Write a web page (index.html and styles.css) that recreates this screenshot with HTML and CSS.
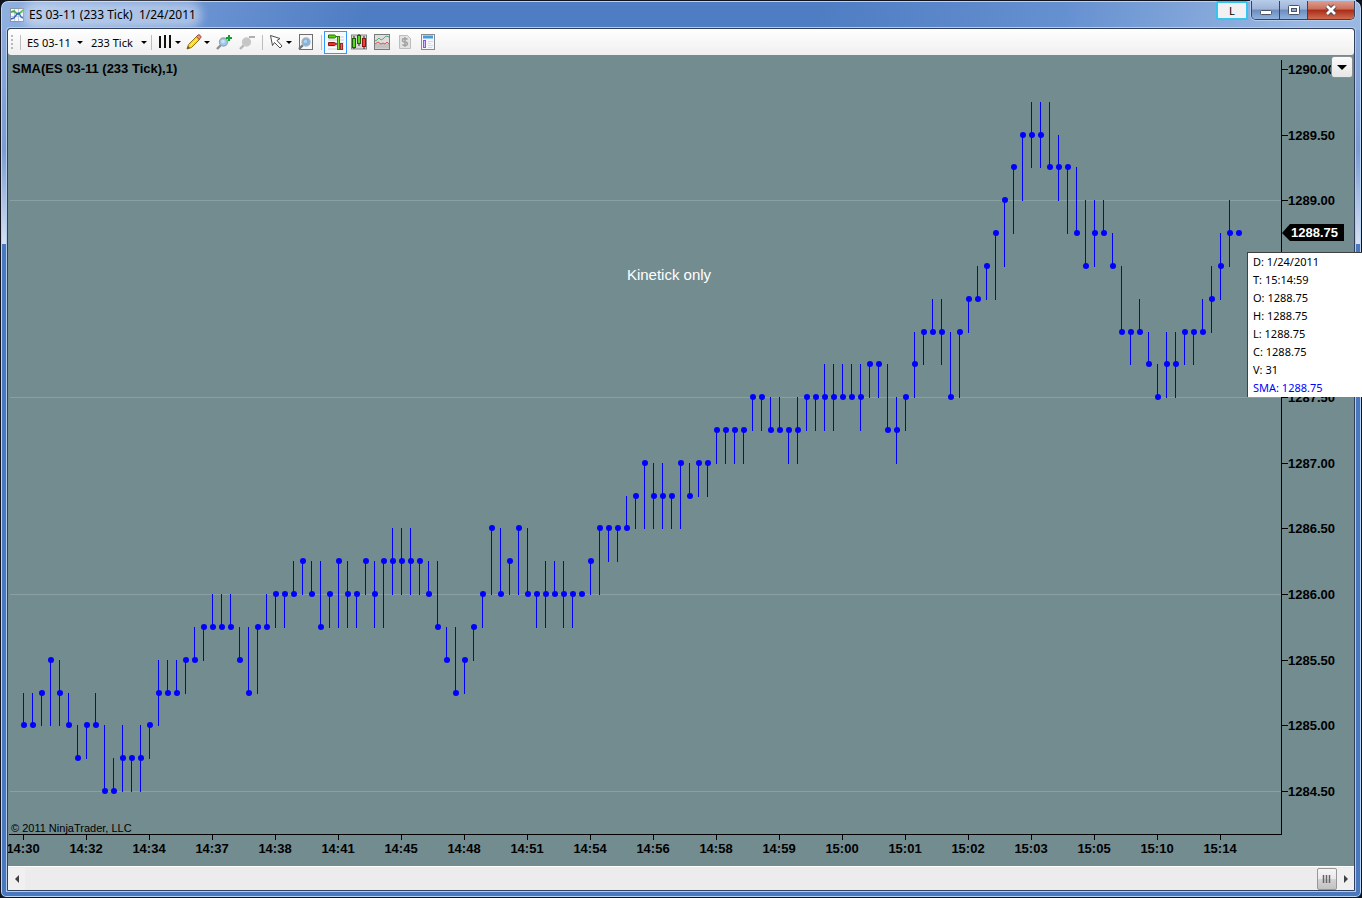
FILE: index.html
```
<!DOCTYPE html>
<html lang="en">
<head>
  <meta charset="UTF-8">
  <meta name="viewport" content="width=device-width, initial-scale=1.0">
  <title>ES 03-11 (233 Tick) 1/24/2011</title>
  <link rel="stylesheet" href="styles.css">
</head>
<body>
  <div class="window">
    <header class="title-bar">
      <svg class="app-icon" width="14" height="14" viewBox="0 0 14 14">
        <rect x="0.5" y="0.5" width="13" height="13" fill="#f6f7fb" stroke="#8b93a8"/>
        <path d="M4.5 1v12M8.5 1v12M1 4.5h12M1 8.5h12" stroke="#c0c6dc"/>
        <path d="M1 4l3-1 3 3 2 0 4-4" fill="none" stroke="#35b535" stroke-width="1.6"/>
        <path d="M1 11l3-1 3-4 2-1 2 4 2 1" fill="none" stroke="#2f5fc4" stroke-width="1.4"/>
      </svg>
      <h1 class="title">ES 03-11 (233 Tick)&nbsp; 1/24/2011</h1>
      <div class="window-buttons">
        <button class="link-btn">L</button>
        <div class="caption-group">
          <button class="caption-btn" title="Minimize">
            <svg width="14" height="12" viewBox="0 0 14 12"><rect x="1.500" y="6.500" width="11" height="4" rx="1" fill="#fff" stroke="#4a5268"/></svg>
          </button>
          <button class="caption-btn" title="Maximize">
            <svg width="14" height="12" viewBox="0 0 14 12"><rect x="1.500" y="1.500" width="11" height="9" rx="1" fill="#fff" stroke="#4a5268"/><rect x="4.500" y="4.500" width="5" height="3" fill="#8eabd6" stroke="#4a5268"/></svg>
          </button>
          <button class="caption-btn close" title="Close">
            <svg width="14" height="12" viewBox="0 0 14 12"><path d="M3 2l8 8M11 2l-8 8" stroke="#59474f" stroke-width="4.600"/><path d="M3 2l8 8M11 2l-8 8" stroke="#fff" stroke-width="2.600"/></svg>
          </button>
        </div>
      </div>
    </header>

    <main class="client">
      <div class="toolbar">
        <span class="grip"></span>
        <span class="sep"></span>
        <label class="picker">
          <select aria-label="Instrument"><option>ES 03-11</option></select>
          <i class="caret"></i>
        </label>
        <label class="picker interval">
          <select aria-label="Interval"><option>233 Tick</option></select>
          <i class="caret"></i>
        </label>
        <span class="sep"></span>
        <button class="tool split" title="Chart style">
          <svg width="16" height="16" viewBox="0 0 16 16"><path d="M3 2v12M8 1v13" stroke="#111" stroke-width="2"/><path d="M13 1v13" stroke="#111" stroke-width="2"/></svg>
          <i class="caret"></i>
        </button>
        <button class="tool split" title="Drawing tools">
          <svg width="16" height="16" viewBox="0 0 16 16">
            <path d="M1 15l1.500-4.500L11 2l3 3-8.500 8.500z" fill="#f8d62e" stroke="#8f7419"/>
            <path d="M4.500 11.500L12 4" stroke="#fff19b"/>
            <path d="M10.500 2.500l1.500-1.500q1-.8 2 .3l.7.7q.8 1-.2 2L13 5.500z" fill="#e9938a" stroke="#a04a43"/>
            <path d="M1 15l1-3 2 2z" fill="#6b5530"/>
          </svg>
          <i class="caret"></i>
        </button>
        <button class="tool" title="Zoom in">
          <svg width="16" height="16" viewBox="0 0 16 16">
            <path d="M1 15l4-4" stroke="#8b8f96" stroke-width="2.400"/>
            <circle cx="7.500" cy="8" r="4" fill="#9ccbee" stroke="#9aa7b5" stroke-width="1.400"/>
            <circle cx="7" cy="7.500" r="1.800" fill="#c6e4f8"/>
            <path d="M13 1v6M10 4h6" stroke="#0aa52c" stroke-width="2"/>
          </svg>
        </button>
        <button class="tool" title="Zoom out" disabled>
          <svg width="16" height="16" viewBox="0 0 16 16">
            <path d="M1 15l4-4" stroke="#b5b5b5" stroke-width="2.400"/>
            <circle cx="7.500" cy="8" r="4" fill="#c6c6c6" stroke="#c9c9c9" stroke-width="1.400"/>
            <path d="M10 3h6" stroke="#b0b0b0" stroke-width="2"/>
          </svg>
        </button>
        <span class="sep"></span>
        <button class="tool split" title="Cursor">
          <svg width="16" height="16" viewBox="0 0 16 16"><path d="M2.500 1.500l9.500 3-3 2 5 5.500-2 2-5.500-5.500-2 3z" fill="#fff" stroke="#4c4c4c"/></svg>
          <i class="caret"></i>
        </button>
        <button class="tool" title="Zoom frame">
          <svg width="16" height="16" viewBox="0 0 16 16">
            <rect x="1.500" y="0.500" width="13" height="15" fill="#f7f7f7" stroke="#6f6f6f"/>
            <path d="M1 15l4-4" stroke="#777" stroke-width="2.400"/>
            <circle cx="8" cy="8" r="4" fill="#7fb4e2" stroke="#a8b4c0" stroke-width="1.400"/>
            <circle cx="7.500" cy="7.500" r="1.800" fill="#a9d2f2"/>
          </svg>
        </button>
        <span class="sep"></span>
        <button class="tool active" title="Chart trader">
          <svg width="16" height="16" viewBox="0 0 16 16">
            <path d="M0 3h16M0 6h16M0 9h16M0 12h16M0 15h16" stroke="#d0d0d0"/>
            <path d="M8 2.500h3M8 10h3" stroke="#333"/>
            <path d="M.5 1h6l2 1.500-2 1.500h-6z" fill="#58d400" stroke="#2c6f00"/>
            <path d="M.5 8.500h6l2 1.500-2 1.500h-6z" fill="#f03028" stroke="#8c1410"/>
            <rect x="9.500" y="2.500" width="2" height="13" fill="#7ade30" stroke="#3b7c18"/>
            <rect x="12.500" y="9.500" width="2" height="6" fill="#f06060" stroke="#a02828"/>
          </svg>
        </button>
        <button class="tool" title="Data box">
          <svg width="16" height="16" viewBox="0 0 16 16">
            <rect x="0.500" y="1" width="15" height="14" fill="#d8d8d8" stroke="#858585"/>
            <path d="M3 2v13M8 0v12M13 2v13" stroke="#222"/>
            <rect x="1.500" y="4.500" width="3" height="9" fill="#58d820" stroke="#235c08"/>
            <rect x="6.500" y="1.500" width="3" height="8" fill="#58d820" stroke="#235c08"/>
            <rect x="11.500" y="4.500" width="3" height="8" fill="#f04038" stroke="#8c1410"/>
          </svg>
        </button>
        <button class="tool" title="Indicators">
          <svg width="16" height="16" viewBox="0 0 16 16">
            <rect x="0.500" y="0.500" width="15" height="15" fill="#dedede" stroke="#7b7b7b"/>
            <path d="M1 9.500h14v5H1z" fill="#c2c2c2"/>
            <path d="M1 7l2-1 2-2 2 2 2-1 3-3 3 1" fill="none" stroke="#4fae78"/>
            <path d="M1 10l3-2 3 2 2-1 2 1 2-2 2 2" fill="none" stroke="#e85050"/>
          </svg>
        </button>
        <button class="tool" title="Strategies" disabled>
          <svg width="16" height="16" viewBox="0 0 16 16">
            <path d="M2.500 1.500h8l3 3v10h-11z" fill="#e2e2e2" stroke="#bdbdbd"/>
            <path d="M10.500 5.500q-1-1-2.500-1-2.500 0-2.500 1.700 0 1.500 2.500 1.800 2.500.3 2.500 1.800Q10.500 11.500 8 11.500q-1.500 0-2.500-1M8 3v10" fill="none" stroke="#a2a2a2" stroke-width="1.400"/>
          </svg>
        </button>
        <button class="tool" title="Properties">
          <svg width="16" height="16" viewBox="0 0 16 16">
            <rect x="1.500" y="0.500" width="13" height="15" fill="#f4f6fb" stroke="#8a8a92"/>
            <path d="M3 3h10" stroke="#459ddb" stroke-width="3"/>
            <rect x="3.500" y="6.500" width="2" height="7" fill="#d7bdff" stroke="#9250e8"/>
            <path d="M8 7.500h5M8 9.500h3M8 11.500h5M8 13.500h4" stroke="#d5d9e8"/>
          </svg>
        </button>
      </div>

      <div class="chart">
        <svg class="plot" id="plot"></svg>
        <button class="chart-menu" title="Chart menu"><i class="caret large"></i></button>
      </div>

      <div class="scroll-bar">
        <button class="scroll-arrow" title="Scroll left">
          <svg width="4" height="8" viewBox="0 0 4 8"><path d="M4 0v8L0 4z" fill="#404040"/></svg>
        </button>
        <button class="scroll-thumb" title="Scroll">
          <svg width="10" height="8" viewBox="0 0 10 8"><path d="M1.500 0v8M4.500 0v8M7.500 0v8" stroke="#666" stroke-width="1.500"/></svg>
        </button>
        <button class="scroll-arrow" title="Scroll right">
          <svg width="4" height="8" viewBox="0 0 4 8"><path d="M0 0v8l4-4z" fill="#404040"/></svg>
        </button>
      </div>
    </main>

    <ul class="data-box" id="dataBox">
      <li>D: 1/24/2011</li>
      <li>T: 15:14:59</li>
      <li>O: 1288.75</li>
      <li>H: 1288.75</li>
      <li>L: 1288.75</li>
      <li>C: 1288.75</li>
      <li>V: 31</li>
      <li class="sma">SMA: 1288.75</li>
    </ul>
  </div>

  <script src="chart.js"></script>
</body>
</html>
```

FILE: styles.css
```
* {
  margin: 0;
  padding: 0;
  box-sizing: border-box;
}

body {
  font-family: 'Noto Sans', 'Open Sans', sans-serif;
  font-size: 11px;
  color: #000;
  background: #10131c;
}

button {
  border: none;
  background: none;
  font: inherit;
  color: inherit;
  display: flex;
  align-items: center;
  justify-content: center;
}

svg {
  display: block;
  flex-shrink: 0;
}

.window {
  position: relative;
  height: 100vh;
  min-height: 400px;
  display: flex;
  flex-direction: column;
  padding: 0 6px 6px;
  border: 1px solid #10131c;
  border-radius: 8px 8px 6px 6px;
  box-shadow: inset 0 0 0 1px #b9d5f3;
  background:
    linear-gradient(100deg, #8fb0df 0, #6d95d3 180px, #4f7dc3 360px, #4f7dc3 60%, #6590d0 78%, #9ab8e2 96%) top / 100% 29px no-repeat,
    linear-gradient(#8cabdc 0, #7b9bd2 120px, #d3dff2 212px, #d3dff2 214px, #4a78bf 214px) 0 29px no-repeat;
}

/* title bar */
.title-bar {
  height: 27px;
  flex-shrink: 0;
  display: flex;
  align-items: center;
  padding-left: 3px;
}

.title {
  margin-left: 5px;
  font-size: 12px;
  font-weight: normal;
  line-height: 16px;
  border-radius: 8px;
  background: rgba(255,255,255,0.4);
  box-shadow: 0 0 8px 6px rgba(255,255,255,0.4);
}

.window-buttons {
  margin-left: auto;
  align-self: flex-start;
  display: flex;
  align-items: flex-start;
  gap: 3px;
}

.link-btn {
  width: 32px;
  height: 19px;
  border: 2px solid #35c3ef;
  border-radius: 2px;
  background: #f1f1f3;
}

.caption-group {
  display: flex;
  height: 19px;
  border: 1px solid #39425c;
  border-top: none;
  border-radius: 0 0 5px 5px;
  overflow: hidden;
  box-shadow: 0 0 0 1px #b4cbea;
}

.caption-btn {
  width: 28px;
  border-right: 1px solid #39425c;
  background: linear-gradient(#b6c9e6 0, #9db4d8 45%, #6c8cbd 50%, #91b1de 100%);
}

.caption-btn.close {
  width: 46px;
  border-right: none;
  background: linear-gradient(#e09d8e 0, #ca6f5c 45%, #aa2b16 50%, #cf6c50 100%);
}

/* client area */
.client {
  flex: 1;
  min-height: 0;
  display: flex;
  flex-direction: column;
  border: 1px solid #303f5c;
  border-radius: 3px 3px 0 0;
  box-shadow: 0 0 0 1px #b4cbea;
  background: #728c90;
  overflow: hidden;
}

.toolbar {
  height: 26px;
  flex-shrink: 0;
  display: flex;
  align-items: center;
  padding-left: 3px;
  border-radius: 3px;
  background: linear-gradient(#fff, #efefef);
}

.grip {
  width: 2px;
  height: 14px;
  margin-right: 3px;
  background: repeating-linear-gradient(#b8b8b8 0, #b8b8b8 2px, transparent 2px, transparent 4px);
}

.sep {
  width: 1px;
  height: 15px;
  margin: 0 2px 0 4px;
  background: #bdbdbd;
}

.picker {
  width: 64px;
  display: flex;
  align-items: center;
  padding-left: 4px;
}

.picker.interval {
  width: 60px;
}

.picker select {
  width: 50px;
  border: none;
  appearance: none;
  background: none;
  font: inherit;
}

.caret {
  flex-shrink: 0;
  border: 3px solid transparent;
  border-top-color: #000;
  border-bottom: none;
}

.caret.large {
  border-width: 5px;
  border-bottom: none;
}

.tool {
  width: 23px;
  height: 23px;
  flex-shrink: 0;
}

.tool.split {
  width: 29px;
  gap: 2px;
}

.tool.active {
  border: 1px solid #3399ff;
  background: #f5faff;
}

/* chart */
.chart {
  position: relative;
  flex: 1;
  min-height: 0;
}

.plot {
  width: 100%;
  height: 100%;
  font-family: 'Liberation Sans', Arial, sans-serif;
}

.plot .grid {
  fill: #8aa0a4;
}

.plot .axis {
  fill: #000;
}

.plot .bar,
.plot .dot {
  fill: #0000ff;
}

.plot .label {
  font-size: 13px;
  font-weight: bold;
}

.plot .time {
  text-anchor: middle;
}

.plot .last-price {
  fill: #fff;
}

.plot .copyright {
  font-size: 11px;
}

.plot .note {
  font-size: 15px;
  fill: #fff;
  text-anchor: middle;
}

.chart-menu {
  position: absolute;
  top: 1px;
  right: 1px;
  width: 22px;
  height: 22px;
  border: 1px solid #8a8f94;
  border-radius: 3px;
  background: linear-gradient(#fafafa, #e6e6e6);
}

/* scroll bar */
.scroll-bar {
  height: 24px;
  flex-shrink: 0;
  display: flex;
  padding-top: 1px;
  border-top: 1px solid #fff;
  background: #ececec;
}

.scroll-arrow {
  width: 17px;
  background: #f0f0f0;
}

.scroll-thumb {
  width: 20px;
  margin-left: auto;
  border: 1px solid #979797;
  border-radius: 2px;
  background: linear-gradient(#f5f5f5 0, #e9e9e9 48%, #d2d2d2 52%, #c2c2c2 100%);
}

/* data box floats over the price axis */
.data-box {
  position: absolute;
  top: 251px;
  right: -1px;
  width: 115px;
  padding-left: 5px;
  border: 1px solid #404040;
  border-right: none;
  border-bottom: none;
  background: #fff;
  list-style: none;
  line-height: 18px;
}

.data-box .sma {
  color: #0000ff;
}
```

FILE: chart.js
```
// [high, low, close] of each bar, in ticks of 0.25 above BASE
const BASE = 1284.5;
const TICK = 0.25;
const TOP_LEVEL = 22;
const BAR_WIDTH = 9;

const bars = [
  [3,2,2], [3,2,2], [3,2,3], [4,2,4], [4,2,3], [3,2,2], [2,1,1], [2,1,2], [3,2,2], [2,0,0],
  [1,0,0], [2,0,1], [1,0,1], [2,0,1], [2,1,2], [4,2,3], [4,3,3], [4,3,3], [4,3,4], [5,4,4],
  [5,4,5], [6,5,5], [6,5,5], [6,5,5], [5,4,4], [5,3,3], [5,3,5], [6,5,5], [6,5,6], [6,5,6],
  [7,6,6], [7,6,7], [7,6,6], [7,5,5], [6,5,6], [7,5,7], [7,5,6], [6,5,6], [7,6,7], [7,5,6],
  [7,5,7], [8,6,7], [8,6,7], [8,6,7], [7,6,7], [7,6,6], [7,5,5], [5,4,4], [5,3,3], [4,3,4],
  [5,4,5], [6,5,6], [8,6,8], [8,6,6], [7,6,7], [8,6,8], [8,6,6], [6,5,6], [7,5,6], [7,6,6],
  [7,5,6], [6,5,6], [6,6,6], [7,6,7], [8,6,8], [8,7,8], [8,7,8], [9,8,8], [9,8,9], [10,8,10],
  [10,8,9], [10,8,9], [9,8,9], [10,8,10], [10,9,9], [10,9,10], [10,9,10], [11,10,11], [11,10,11], [11,10,11],
  [11,10,11], [12,11,12], [12,11,12], [12,11,11], [12,11,11], [11,10,11], [12,10,11], [12,11,12], [12,11,12], [13,11,12],
  [13,11,12], [13,12,12], [13,12,12], [13,11,12], [13,12,13], [13,12,13], [13,11,11], [12,10,11], [12,11,12], [14,12,13],
  [14,13,14], [15,14,14], [15,13,14], [14,12,12], [14,12,14], [15,14,15], [16,15,15], [16,15,16], [17,15,17], [18,16,18],
  [19,17,19], [20,18,20], [21,19,20], [21,19,20], [21,19,19], [20,18,19], [19,17,19], [19,17,17], [18,16,16], [18,16,17],
  [18,17,17], [17,16,16], [16,14,14], [14,13,14], [15,14,14], [14,13,13], [13,12,12], [14,12,13], [14,12,13], [14,13,14],
  [14,13,14], [15,14,14], [16,14,15], [17,15,16], [18,16,17], [17,17,17]
];

// one label every 7 bars
const times = ['14:30', '14:32', '14:34', '14:37', '14:38', '14:41', '14:45', '14:48', '14:51', '14:54',
  '14:56', '14:58', '14:59', '15:00', '15:01', '15:02', '15:03', '15:05', '15:10', '15:14'];

const plot = document.getElementById('plot');
const dataBox = document.getElementById('dataBox');

function rect(cls, x, y, w, h) {
  return `<rect class="${cls}" x="${x}" y="${y}" width="${w}" height="${h}"/>`;
}

function text(cls, x, y, value) {
  return `<text class="${cls}" x="${x}" y="${y}">${value}</text>`;
}

function draw() {
  const width = plot.clientWidth;
  const height = plot.clientHeight;
  const axisX = width - 73;
  const axisY = height - 32;
  const levelY = level => Math.round(height - 75 - level * (height - 89) / TOP_LEVEL);
  const barX = i => axisX - 42 - (bars.length - 1 - i) * BAR_WIDTH;
  const plotTop = plot.getBoundingClientRect().top;
  const box = dataBox.getBoundingClientRect();
  let out = '';

  for (let level = 0; level <= 18; level += 6) {
    out += rect('grid', 2, levelY(level), axisX - 2, 1);
  }

  // axes
  out += rect('axis', axisX, 5, 1, axisY - 4);
  out += rect('axis', 1, axisY, axisX, 1);
  for (let level = 0; level <= TOP_LEVEL; level += 2) {
    const y = levelY(level);
    // no label where the data box covers it completely
    if (plotTop + y - 6 > box.top && plotTop + y + 6 < box.bottom) continue;
    out += rect('axis', axisX, y, 7, 1);
    out += text('label', axisX + 7, y + 5, (BASE + level * TICK).toFixed(2));
  }
  times.forEach((time, k) => {
    const x = barX(k * 7) - 1;
    out += rect('axis', x, axisY, 1, 6);
    out += text('label time', x, axisY + 19, time);
  });

  bars.forEach(([high, low, close], i) => {
    const x = barX(i);
    out += rect('bar', x - 1, levelY(high), 1, levelY(low) - levelY(high) + 1);
    out += `<circle class="dot" cx="${x}" cy="${levelY(close)}" r="3"/>`;
  });

  // last price marker
  const last = bars[bars.length - 1][2];
  const y = levelY(last);
  out += `<path class="axis" d="M${axisX + 1} ${y}l8 -9h54v17h-54z"/>`;
  out += text('label last-price', axisX + 10, y + 4, (BASE + last * TICK).toFixed(2));

  out += text('label', 4, 18, 'SMA(ES 03-11 (233 Tick),1)');
  out += text('note', Math.round(width * 0.491), 225, 'Kinetick only');
  out += text('copyright', 3, axisY - 2, '© 2011 NinjaTrader, LLC');
  plot.innerHTML = out;
}

window.addEventListener('resize', draw);
draw();
```
